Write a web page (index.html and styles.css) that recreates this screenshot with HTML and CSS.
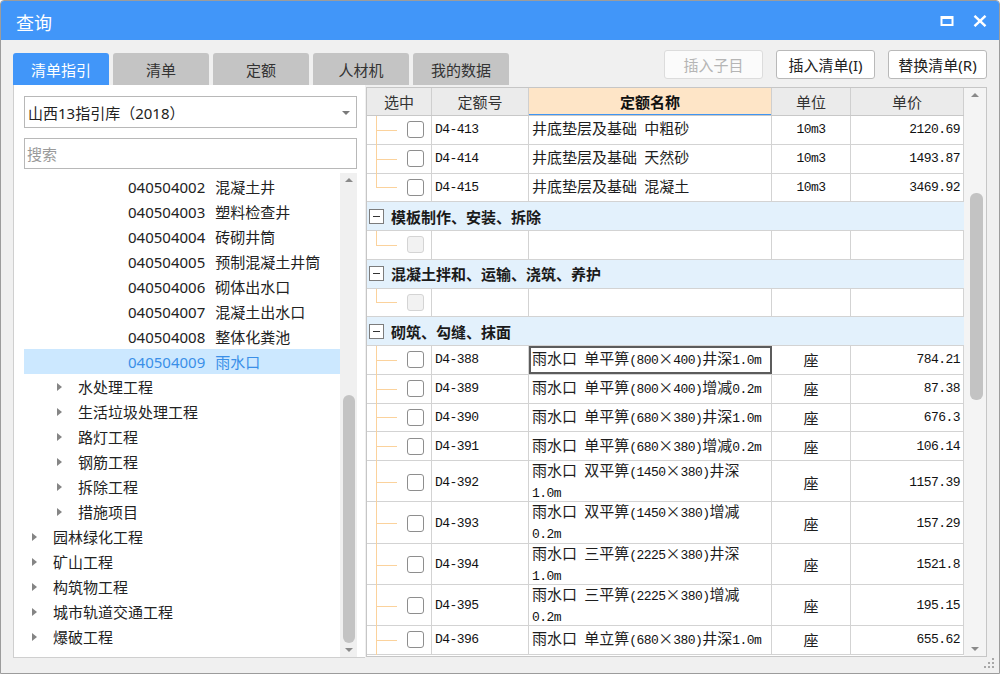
FILE: index.html
```html
<!DOCTYPE html>
<html lang="zh-CN">
<head>
<meta charset="utf-8">
<title>查询</title>
<link rel="stylesheet" href="styles.css">
</head>
<body>
<div class="window">
  <div class="titlebar">
    <span class="title">查询</span>
    <div class="wctl">
      <svg class="ic" width="14" height="12" viewBox="0 0 14 12"><rect x="1.5" y="2" width="11" height="8" fill="none" stroke="#fff" stroke-width="2"/><rect x="1" y="1" width="12" height="3" fill="#fff"/></svg>
      <svg class="ic" width="14" height="12" viewBox="0 0 14 12"><path d="M1.5 0.8L12.5 11.2M12.5 0.8L1.5 11.2" stroke="#fff" stroke-width="2.4"/></svg>
    </div>
  </div>

  <div class="toolbar">
    <div class="tabs">
      <div class="tab active">清单指引</div>
      <div class="tab">清单</div>
      <div class="tab">定额</div>
      <div class="tab">人材机</div>
      <div class="tab">我的数据</div>
    </div>
    <div class="actions">
      <button class="btn" disabled>插入子目</button>
      <button class="btn">插入清单(I)</button>
      <button class="btn">替换清单(R)</button>
    </div>
  </div>

  <div class="main">
    <div class="left">
      <div class="select">山西13指引库（2018）<span class="caret"></span></div>
      <div class="search">搜索</div>
      <div class="tree">
        <div class="tree-list">
          <div class="node l3"><span class="code">040504002</span>混凝土井</div>
          <div class="node l3"><span class="code">040504003</span>塑料检查井</div>
          <div class="node l3"><span class="code">040504004</span>砖砌井筒</div>
          <div class="node l3"><span class="code">040504005</span>预制混凝土井筒</div>
          <div class="node l3"><span class="code">040504006</span>砌体出水口</div>
          <div class="node l3"><span class="code">040504007</span>混凝土出水口</div>
          <div class="node l3"><span class="code">040504008</span>整体化粪池</div>
          <div class="node l3 selected"><span class="code">040504009</span>雨水口</div>
          <div class="node l2"><span class="tri"></span>水处理工程</div>
          <div class="node l2"><span class="tri"></span>生活垃圾处理工程</div>
          <div class="node l2"><span class="tri"></span>路灯工程</div>
          <div class="node l2"><span class="tri"></span>钢筋工程</div>
          <div class="node l2"><span class="tri"></span>拆除工程</div>
          <div class="node l2"><span class="tri"></span>措施项目</div>
          <div class="node l1"><span class="tri"></span>园林绿化工程</div>
          <div class="node l1"><span class="tri"></span>矿山工程</div>
          <div class="node l1"><span class="tri"></span>构筑物工程</div>
          <div class="node l1"><span class="tri"></span>城市轨道交通工程</div>
          <div class="node l1"><span class="tri"></span>爆破工程</div>
        </div>
        <div class="vscroll tree-scroll">
          <span class="arr up"></span>
          <div class="track"><div class="thumb" style="margin-top:208px;height:248px"></div></div>
          <span class="arr down"></span>
        </div>
      </div>
    </div>

    <div class="right">
      <div class="grid">
        <div class="row head">
          <div class="c">选中</div>
          <div class="c">定额号</div>
          <div class="c hl">定额名称</div>
          <div class="c">单位</div>
          <div class="c">单价</div>
        </div>

        <div class="row">
          <div class="c sel cont"><i class="cb"></i></div>
          <div class="c code">D4-413</div>
          <div class="c name"><span>井底垫层及基础<span class="m"> </span>中粗砂</span></div>
          <div class="c unit m">10m3</div>
          <div class="c price">2120.69</div>
        </div>
        <div class="row">
          <div class="c sel cont"><i class="cb"></i></div>
          <div class="c code">D4-414</div>
          <div class="c name"><span>井底垫层及基础<span class="m"> </span>天然砂</span></div>
          <div class="c unit m">10m3</div>
          <div class="c price">1493.87</div>
        </div>
        <div class="row">
          <div class="c sel"><i class="cb"></i></div>
          <div class="c code">D4-415</div>
          <div class="c name"><span>井底垫层及基础<span class="m"> </span>混凝土</span></div>
          <div class="c unit m">10m3</div>
          <div class="c price">3469.92</div>
        </div>

        <div class="row group"><span class="fold"></span>模板制作、安装、拆除</div>
        <div class="row">
          <div class="c sel"><i class="cb off"></i></div>
          <div class="c code"></div>
          <div class="c name"></div>
          <div class="c unit"></div>
          <div class="c price"></div>
        </div>

        <div class="row group"><span class="fold"></span>混凝土拌和、运输、浇筑、养护</div>
        <div class="row">
          <div class="c sel"><i class="cb off"></i></div>
          <div class="c code"></div>
          <div class="c name"></div>
          <div class="c unit"></div>
          <div class="c price"></div>
        </div>

        <div class="row group"><span class="fold"></span>砌筑、勾缝、抹面</div>
        <div class="row">
          <div class="c sel cont"><i class="cb"></i></div>
          <div class="c code">D4-388</div>
          <div class="c name focus"><span>雨水口<span class="m"> </span>单平箅<span class="m">(800</span>×<span class="m">400)</span>井深<span class="m">1.0m</span></span></div>
          <div class="c unit">座</div>
          <div class="c price">784.21</div>
        </div>
        <div class="row">
          <div class="c sel cont"><i class="cb"></i></div>
          <div class="c code">D4-389</div>
          <div class="c name"><span>雨水口<span class="m"> </span>单平箅<span class="m">(800</span>×<span class="m">400)</span>增减<span class="m">0.2m</span></span></div>
          <div class="c unit">座</div>
          <div class="c price">87.38</div>
        </div>
        <div class="row">
          <div class="c sel cont"><i class="cb"></i></div>
          <div class="c code">D4-390</div>
          <div class="c name"><span>雨水口<span class="m"> </span>单平箅<span class="m">(680</span>×<span class="m">380)</span>井深<span class="m">1.0m</span></span></div>
          <div class="c unit">座</div>
          <div class="c price">676.3</div>
        </div>
        <div class="row">
          <div class="c sel cont"><i class="cb"></i></div>
          <div class="c code">D4-391</div>
          <div class="c name"><span>雨水口<span class="m"> </span>单平箅<span class="m">(680</span>×<span class="m">380)</span>增减<span class="m">0.2m</span></span></div>
          <div class="c unit">座</div>
          <div class="c price">106.14</div>
        </div>
        <div class="row tall">
          <div class="c sel cont"><i class="cb"></i></div>
          <div class="c code">D4-392</div>
          <div class="c name"><span>雨水口<span class="m"> </span>双平箅<span class="m">(1450</span>×<span class="m">380)</span>井深<br><span class="m">1.0m</span></span></div>
          <div class="c unit">座</div>
          <div class="c price">1157.39</div>
        </div>
        <div class="row tall">
          <div class="c sel cont"><i class="cb"></i></div>
          <div class="c code">D4-393</div>
          <div class="c name"><span>雨水口<span class="m"> </span>双平箅<span class="m">(1450</span>×<span class="m">380)</span>增减<br><span class="m">0.2m</span></span></div>
          <div class="c unit">座</div>
          <div class="c price">157.29</div>
        </div>
        <div class="row tall">
          <div class="c sel cont"><i class="cb"></i></div>
          <div class="c code">D4-394</div>
          <div class="c name"><span>雨水口<span class="m"> </span>三平箅<span class="m">(2225</span>×<span class="m">380)</span>井深<br><span class="m">1.0m</span></span></div>
          <div class="c unit">座</div>
          <div class="c price">1521.8</div>
        </div>
        <div class="row tall">
          <div class="c sel cont"><i class="cb"></i></div>
          <div class="c code">D4-395</div>
          <div class="c name"><span>雨水口<span class="m"> </span>三平箅<span class="m">(2225</span>×<span class="m">380)</span>增减<br><span class="m">0.2m</span></span></div>
          <div class="c unit">座</div>
          <div class="c price">195.15</div>
        </div>
        <div class="row">
          <div class="c sel cont"><i class="cb"></i></div>
          <div class="c code">D4-396</div>
          <div class="c name"><span>雨水口<span class="m"> </span>单立箅<span class="m">(680</span>×<span class="m">380)</span>井深<span class="m">1.0m</span></span></div>
          <div class="c unit">座</div>
          <div class="c price">655.62</div>
        </div>
      </div>
      <div class="vscroll grid-scroll">
        <span class="arr up"></span>
        <div class="track"><div class="thumb" style="margin-top:91px;height:207px"></div></div>
        <span class="arr down"></span>
      </div>
    </div>
  </div>

  <svg class="grip" width="12" height="12" viewBox="0 0 12 12">
    <rect x="9" y="1" width="2" height="2" fill="#a8a8a8"/>
    <rect x="5" y="5" width="2" height="2" fill="#a8a8a8"/>
    <rect x="9" y="5" width="2" height="2" fill="#a8a8a8"/>
    <rect x="1" y="9" width="2" height="2" fill="#a8a8a8"/>
    <rect x="5" y="9" width="2" height="2" fill="#a8a8a8"/>
    <rect x="9" y="9" width="2" height="2" fill="#a8a8a8"/>
  </svg>
</div>
</body>
</html>
```

FILE: styles.css
```css
html, body {
  margin: 0;
  padding: 0;
  background: #ffffff;
}

body {
  font-family: "Noto Sans", "Noto Sans CJK SC", sans-serif;
  font-size: 15px;
  color: #222;
}

.window {
  position: relative;
  width: 1000px;
  height: 674px;
  box-sizing: border-box;
  border: 1px solid #9c9c9c;
  border-radius: 4px 4px 0 0;
  background: #f0f0f0;
  overflow: hidden;
}

/* ---------- title bar ---------- */
.titlebar {
  height: 39px;
  background: #4196f9;
  display: flex;
  align-items: center;
  justify-content: space-between;
  padding: 0 12px 0 15px;
}

.title {
  color: #fff;
  font-size: 18px;
  font-family: "Noto Sans CJK SC", sans-serif;
  line-height: 1;
  margin-top: 2px;
}

.wctl {
  display: flex;
  gap: 19px;
  align-items: center;
  margin-top: 1px;
}

.ic {
  display: block;
}

/* ---------- toolbar ---------- */
.toolbar {
  height: 45px;
  display: flex;
  justify-content: space-between;
  padding: 0 12px;
}

.tabs {
  display: flex;
  gap: 4px;
  align-self: flex-end;
}

.tab {
  width: 96px;
  height: 32px;
  display: flex;
  align-items: center;
  justify-content: center;
  background: #c4c4c4;
  color: #333;
  border-radius: 3px 3px 0 0;
  font-size: 15px;
}

.tab.active {
  background: #4196f9;
  color: #fff;
}

.actions {
  display: flex;
  gap: 13px;
  margin-top: 10px;
}

.btn {
  width: 99px;
  height: 29px;
  box-sizing: border-box;
  border: 1px solid #b9b9b9;
  border-radius: 3px;
  background: #fff;
  color: #222;
  font-family: "Noto Sans", "Noto Sans CJK SC", sans-serif;
  font-size: 15px;
  padding: 0;
}

.btn:disabled {
  border-color: #dcdcdc;
  background: #fbfbfb;
  color: #b5b5b5;
}

/* ---------- main ---------- */
.main {
  display: flex;
  height: 573px;
  padding: 0 12px;
}

.left {
  width: 352px;
  box-sizing: border-box;
  background: #fff;
  border-left: 1px solid #cfcfcf;
  border-bottom: 1px solid #cfcfcf;
  padding: 11px 8px 0 10px;
  display: flex;
  flex-direction: column;
}

.select {
  position: relative;
  height: 32px;
  box-sizing: border-box;
  border: 1px solid #b8b8b8;
  display: flex;
  align-items: center;
  padding-left: 3px;
  font-size: 15px;
  color: #222;
}

.caret {
  position: absolute;
  right: 6px;
  top: 14px;
  width: 0;
  height: 0;
  border-left: 4px solid transparent;
  border-right: 4px solid transparent;
  border-top: 4px solid #7a7a7a;
}

.search {
  margin-top: 10px;
  height: 31px;
  box-sizing: border-box;
  border: 1px solid #b8b8b8;
  display: flex;
  align-items: center;
  padding-left: 2px;
  color: #9a9a9a;
  font-size: 15px;
}

.tree {
  margin-top: 4px;
  flex: 1;
  display: flex;
  min-height: 0;
}

.tree-list {
  flex: 1;
  padding-top: 1px;
  overflow: hidden;
}

.node {
  height: 25px;
  display: flex;
  align-items: center;
  white-space: nowrap;
  color: #222;
  font-size: 15px;
}

.node.l3 { padding-left: 104px; }
.node.l2 { padding-left: 33px; }
.node.l1 { padding-left: 8px; }

.node .code {
  margin-right: 10px;
}

.node.selected {
  background: #cce8ff;
  color: #3a8fe8;
}

.tri {
  width: 0;
  height: 0;
  border-top: 4px solid transparent;
  border-bottom: 4px solid transparent;
  border-left: 5px solid #858585;
  margin-right: 16px;
}

/* ---------- scrollbars ---------- */
.vscroll {
  display: flex;
  flex-direction: column;
  align-items: center;
}

.tree-scroll {
  width: 17px;
  background: #f0f0f0;
}

.vscroll .arr {
  height: 14px;
  width: 100%;
  display: flex;
  align-items: center;
  justify-content: center;
}

.vscroll .arr::before {
  content: "";
  width: 0;
  height: 0;
  border-left: 4px solid transparent;
  border-right: 4px solid transparent;
}

.vscroll .arr.up::before { border-bottom: 4px solid #8a8a8a; }
.vscroll .arr.down::before { border-top: 4px solid #8a8a8a; }

.track {
  flex: 1;
  width: 100%;
  display: flex;
  flex-direction: column;
  align-items: center;
}

.thumb {
  width: 12px;
  border-radius: 6px;
  background: #c3c3c3;
}

.grid-scroll {
  width: 22px;
  background: #f4f4f4;
}

.grid-scroll .track {
  align-items: flex-start;
  padding-left: 6px;
  box-sizing: border-box;
}

.grid-scroll .thumb {
  width: 13px;
}

/* ---------- right grid ---------- */
.right {
  margin: 2px 0 0 1px;
  width: 621px;
  height: 570px;
  box-sizing: border-box;
  border: 1px solid #c6c6c6;
  background: #fff;
  display: flex;
}

.grid {
  width: 597px;
  overflow: hidden;
}

.row {
  display: grid;
  grid-template-columns: 65px 97px 243px 79px 113px;
  height: 28.75px;
  box-sizing: border-box;
  border-bottom: 1px solid #d3d3d3;
  font-family: "Noto Sans CJK SC", sans-serif;
  font-size: 15px;
  color: #1e1e1e;
}

.row.tall {
  height: 41.25px;
}

.c {
  border-right: 1px solid #d3d3d3;
  display: flex;
  align-items: center;
  box-sizing: border-box;
  min-width: 0;
  white-space: nowrap;
}

.row.head {
  height: 28px;
  background: #ebebeb;
  color: #333;
  border-bottom-color: #c8c8c8;
}

.row.head .c {
  justify-content: center;
  border-right-color: #cfcfcf;
}

.row.head .c.hl {
  background: #fee5c7;
  font-weight: bold;
  color: #111;
  box-shadow: inset 0 -1px 0 #3f95f3;
}

.m,
.c.code,
.c.price,
.c.unit.m {
  font-family: "Liberation Mono", monospace;
  font-size: 13px;
  letter-spacing: -0.55px;
  color: #111;
}

.c.code {
  padding-left: 3px;
}

.c.name {
  padding-left: 3px;
  line-height: 18px;
}

.c.name.focus {
  outline: 2px solid #5c5c5c;
  outline-offset: -2px;
}

.c.unit {
  justify-content: center;
}

.c.price {
  justify-content: flex-end;
  padding-right: 3px;
}

.c.sel {
  position: relative;
  padding-left: 40px;
}

.c.sel::before {
  content: "";
  position: absolute;
  left: 9px;
  top: 0;
  width: 1px;
  height: 50%;
  background: #fbd29c;
}

.c.sel.cont::before {
  height: calc(100% + 1px);
}

.c.sel::after {
  content: "";
  position: absolute;
  left: 9px;
  top: 50%;
  width: 21px;
  height: 1px;
  background: #fbd29c;
}

.cb {
  display: block;
  width: 17px;
  height: 17px;
  box-sizing: border-box;
  border: 1px solid #8e8e8e;
  border-radius: 3px;
  background: #fff;
}

.cb.off {
  border-color: #d4d4d4;
  background: #f2f2f2;
}

.row.group {
  display: flex;
  align-items: center;
  background: #e3f1fc;
  font-weight: bold;
  color: #1a1a1a;
  padding-left: 2px;
}

.fold {
  position: relative;
  width: 15px;
  height: 15px;
  box-sizing: border-box;
  border: 1px solid #7c7c7c;
  background: #fff;
  margin-right: 7px;
}

.fold::after {
  content: "";
  position: absolute;
  left: 3px;
  right: 3px;
  top: 6px;
  height: 1px;
  background: #333;
}

.grip {
  position: absolute;
  right: 4px;
  bottom: 4px;
}
```
